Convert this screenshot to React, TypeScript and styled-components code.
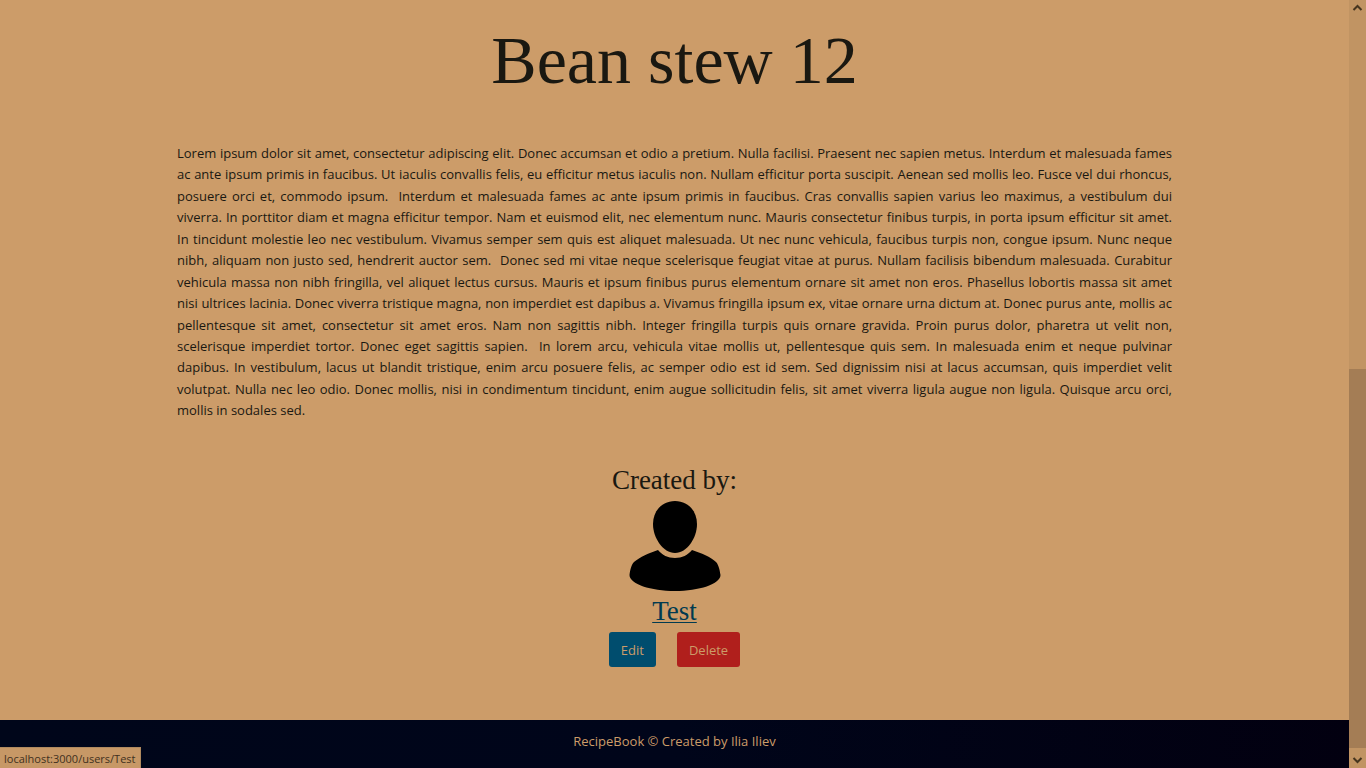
import React from "react";
import styled, { createGlobalStyle } from "styled-components";

const GlobalStyle = createGlobalStyle`
  * { box-sizing: border-box; }
  body {
    margin: 0;
    background: #cc9c69;
    color: #1a1811;
    font-family: "Open Sans", sans-serif;
    font-size: 13px;
  }
`;

const Shell = styled.div`
  display: flex;
  min-height: 100vh;
`;

const Page = styled.div`
  flex: 1;
  min-width: 0;
  display: flex;
  flex-direction: column;
`;

const Recipe = styled.main`
  flex: 1;
  padding: 20px 177px 0;
  display: flex;
  flex-direction: column;
  align-items: center;
`;

const Title = styled.h1`
  margin: 0;
  font: 400 68px/80px "Liberation Serif", serif;
`;

const Description = styled.p`
  align-self: stretch;
  margin: 43px 0 0;
  line-height: 1.65;
`;

const Line = styled.span`
  display: block;
  text-align: justify;
  text-align-last: justify;

  &:last-child {
    text-align-last: left;
  }
`;

const Author = styled.section`
  margin-top: 40px;
  display: flex;
  flex-direction: column;
  align-items: center;
  font: 400 27px/36px "Liberation Serif", serif;
`;

const AuthorHeading = styled.h2`
  margin: 0;
  font: inherit;
`;

const Avatar = styled.svg`
  width: 92px;
  height: 90px;
  margin: 3px 0 2px;
`;

const AuthorLink = styled.a`
  color: #003a50;
  text-underline-offset: 2px;
  text-decoration-thickness: 1px;
`;

const Actions = styled.div`
  display: flex;
  gap: 21px;
  margin-top: 3px;
`;

const ActionButton = styled.button<{ $color: string }>`
  height: 35px;
  padding: 1px 12px 0;
  border: 0;
  border-radius: 3px;
  background: ${(p) => p.$color};
  color: #cc9c69;
  font: 13px/20px "Open Sans", sans-serif;
`;

const Footer = styled.footer`
  height: 48px;
  display: flex;
  align-items: center;
  justify-content: center;
  padding-bottom: 6px;
  background: linear-gradient(90deg, #00061a, #00051a 50%, #020010);
  color: #cc9c69;
`;

const Scrollbar = styled.div`
  width: 17px;
  display: flex;
  flex-direction: column;
  background: #c19463;
`;

const ScrollArrow = styled.svg`
  width: 17px;
  height: 20px;
  fill: none;
  stroke: #46351f;
  stroke-width: 2;
`;

const ScrollTrack = styled.div`
  flex: 1;
  display: flex;
  flex-direction: column;
  justify-content: flex-end;
`;

const ScrollThumb = styled.div`
  height: 52%;
  background: #a47d55;
`;

const StatusBubble = styled.div`
  position: fixed;
  left: 0;
  bottom: 0;
  height: 21px;
  padding: 0 4px;
  border-top: 1px solid #b08a5f;
  border-right: 1px solid #b08a5f;
  background: #c79866;
  color: #3f3020;
  font-size: 11px;
  line-height: 22px;
`;

const description = [
  "Lorem ipsum dolor sit amet, consectetur adipiscing elit. Donec accumsan et odio a pretium. Nulla facilisi. Praesent nec sapien metus. Interdum et malesuada fames",
  "ac ante ipsum primis in faucibus. Ut iaculis convallis felis, eu efficitur metus iaculis non. Nullam efficitur porta suscipit. Aenean sed mollis leo. Fusce vel dui rhoncus,",
  "posuere orci et, commodo ipsum. \u00a0Interdum et malesuada fames ac ante ipsum primis in faucibus. Cras convallis sapien varius leo maximus, a vestibulum dui",
  "viverra. In porttitor diam et magna efficitur tempor. Nam et euismod elit, nec elementum nunc. Mauris consectetur finibus turpis, in porta ipsum efficitur sit amet.",
  "In tincidunt molestie leo nec vestibulum. Vivamus semper sem quis est aliquet malesuada. Ut nec nunc vehicula, faucibus turpis non, congue ipsum. Nunc neque",
  "nibh, aliquam non justo sed, hendrerit auctor sem. \u00a0Donec sed mi vitae neque scelerisque feugiat vitae at purus. Nullam facilisis bibendum malesuada. Curabitur",
  "vehicula massa non nibh fringilla, vel aliquet lectus cursus. Mauris et ipsum finibus purus elementum ornare sit amet non eros. Phasellus lobortis massa sit amet",
  "nisi ultrices lacinia. Donec viverra tristique magna, non imperdiet est dapibus a. Vivamus fringilla ipsum ex, vitae ornare urna dictum at. Donec purus ante, mollis ac",
  "pellentesque sit amet, consectetur sit amet eros. Nam non sagittis nibh. Integer fringilla turpis quis ornare gravida. Proin purus dolor, pharetra ut velit non,",
  "scelerisque imperdiet tortor. Donec eget sagittis sapien. \u00a0In lorem arcu, vehicula vitae mollis ut, pellentesque quis sem. In malesuada enim et neque pulvinar",
  "dapibus. In vestibulum, lacus ut blandit tristique, enim arcu posuere felis, ac semper odio est id sem. Sed dignissim nisi at lacus accumsan, quis imperdiet velit",
  "volutpat. Nulla nec leo odio. Donec mollis, nisi in condimentum tincidunt, enim augue sollicitudin felis, sit amet viverra ligula augue non ligula. Quisque arcu orci,",
  "mollis in sodales sed.",
];

export default function App() {
  return (
    <Shell>
      <GlobalStyle />
      <Page>
        <Recipe>
          <Title>Bean stew 12</Title>
          <Description>
            {description.map((line) => (
              <Line key={line}>{line} </Line>
            ))}
          </Description>
          <Author>
            <AuthorHeading>Created by:</AuthorHeading>
            <Avatar viewBox="0 0 92 90" role="img" aria-label="Profile picture">
              <path d="M46 0C59 0 68 10 68 23C68 37 58 52 46 52C34 52 24 37 24 23C24 10 33 0 46 0Z" />
              <path d="M29 49C33 54 39 57 46 57C53 57 59 54 63 49C72 52 82 56 87 61C90 64 91 71 91.500 74C91.500 83 70 90 46 90C22 90 .5 83 .5 74C1 70 2 64 5 61C11 56 20 52 29 49Z" />
            </Avatar>
            <AuthorLink href="/users/Test">Test</AuthorLink>
          </Author>
          <Actions>
            <ActionButton type="button" $color="#004d6e">Edit</ActionButton>
            <ActionButton type="button" $color="#b01f1c">Delete</ActionButton>
          </Actions>
        </Recipe>
        <Footer>RecipeBook © Created by Ilia Iliev</Footer>
      </Page>
      <Scrollbar aria-hidden="true">
        <ScrollArrow viewBox="0 0 17 20"><path d="M4.500 10L8.500 6L12.500 10" /></ScrollArrow>
        <ScrollTrack><ScrollThumb /></ScrollTrack>
        <ScrollArrow viewBox="0 0 17 20"><path d="M4.500 10L8.500 14L12.500 10" /></ScrollArrow>
      </Scrollbar>
      <StatusBubble>localhost:3000/users/Test</StatusBubble>
    </Shell>
  );
}
